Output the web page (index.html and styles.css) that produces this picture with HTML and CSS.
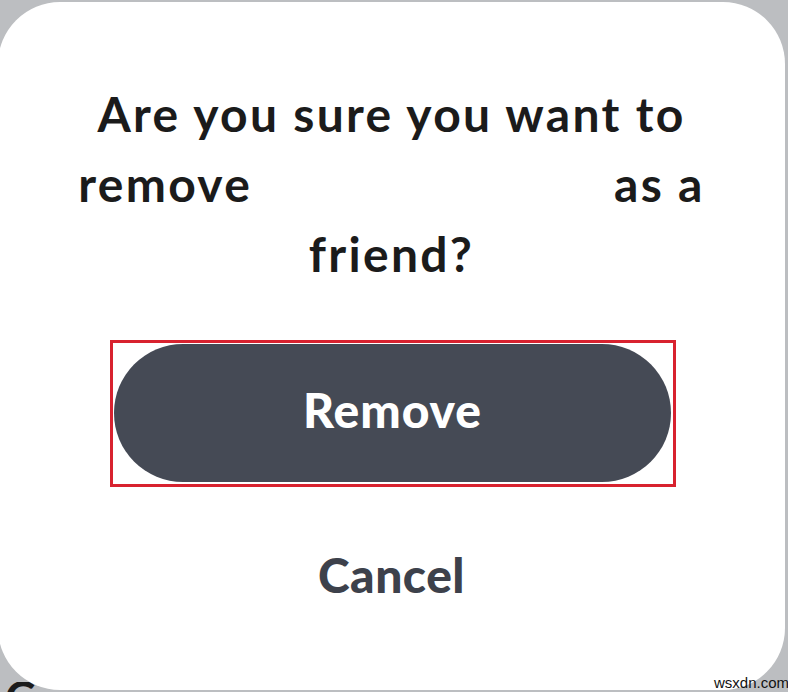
FILE: index.html
```html
<!DOCTYPE html>
<html>
<head>
<meta charset="utf-8">
<link rel="stylesheet" href="styles.css">
</head>
<body>
<div class="card">
  <p class="title">Are you sure you want to<br>remove<span class="redacted"></span>as a<br>friend?</p>
  <div class="highlight">
    <button class="remove">Remove</button>
  </div>
  <div class="cancel">Cancel</div>
</div>
<div class="peek"><span class="peek-glyph">C</span></div>
<span class="watermark">wsxdn.com</span>
</body>
</html>
```
FILE: styles.css
```css
html, body {
  margin: 0;
  padding: 0;
}
body {
  width: 788px;
  height: 692px;
  overflow: hidden;
  background: #bcbec1;
  position: relative;
  font-family: Lato, "Noto Sans", sans-serif;
}
.card {
  box-sizing: border-box;
  width: 787px;
  height: 688px;
  margin: 2px 0 0 -2px;
  background: #ffffff;
  border-radius: 62px;
  display: flex;
  flex-direction: column;
  align-items: center;
  padding-top: 77px;
}
.title {
  margin: 0;
  font-size: 48px;
  line-height: 70px;
  font-weight: 700;
  color: #1b1b1b;
  text-align: center;
  letter-spacing: 2.3px;
}
.redacted {
  display: inline-block;
  width: 362px;
}
.highlight {
  margin-top: 51px;
  margin-left: 3px;
  border: 3px solid #d8222f;
  padding: 1px 2px 2px 1px;
}
.remove {
  display: flex;
  align-items: center;
  justify-content: center;
  width: 557px;
  height: 138px;
  border: none;
  border-radius: 69px;
  background: #454a55;
  color: #ffffff;
  font-family: Lato, "Noto Sans", sans-serif;
  font-size: 48px;
  font-weight: 900;
  padding: 0 0 8px 0;
  letter-spacing: 1px;
}
.cancel {
  margin-top: 53px;
  font-size: 48px;
  line-height: 70px;
  font-weight: 900;
  color: #3d414b;
  letter-spacing: 0.5px;
}
.peek {
  position: absolute;
  left: 5px;
  top: 682px;
  width: 40px;
  height: 10px;
  overflow: hidden;
}
.peek-glyph {
  display: block;
  margin-top: -8px;
  font-size: 46px;
  line-height: 46px;
  font-weight: 700;
  color: #1b1b1b;
}
.watermark {
  position: absolute;
  left: 714px;
  top: 674px;
  font-family: "Liberation Sans", Arial, sans-serif;
  font-size: 15px;
  line-height: 18px;
  color: #111111;
}
```
